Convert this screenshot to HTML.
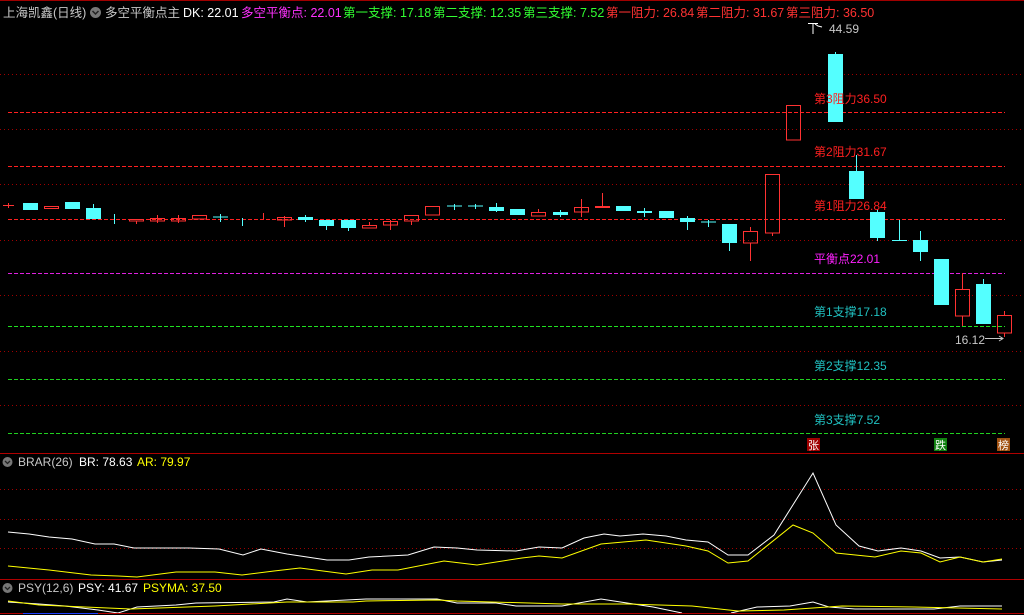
<!DOCTYPE html>
<html><head><meta charset="utf-8"><style>
html,body{margin:0;padding:0;background:#000;}
svg{display:block;font-family:"Liberation Sans","Noto Sans CJK SC",sans-serif;}
</style></head><body>
<svg width="1024" height="615" viewBox="0 0 1024 615" xmlns="http://www.w3.org/2000/svg">
<rect width="1024" height="615" fill="#000"/>
<line x1="0" y1="0.5" x2="1024" y2="0.5" stroke="#a00000"/>
<g font-size="12.5">
<text x="3" y="17" fill="#c8c8c8">上海凯鑫(日线)</text>
<circle cx="95.5" cy="12.5" r="5.5" fill="#777"/>
<path d="M92.5 11 L95.5 14 L98.5 11" stroke="#222" stroke-width="1.5" fill="none"/>
<text x="105" y="17" fill="#c8c8c8">多空平衡点主</text>
<text x="183" y="17" fill="#fff">DK: 22.01</text>
<text x="241" y="17" fill="#ff32ff">多空平衡点: 22.01</text>
<text x="343" y="17" fill="#32ff32">第一支撑: 17.18</text>
<text x="433" y="17" fill="#32ff32">第二支撑: 12.35</text>
<text x="523" y="17" fill="#32ff32">第三支撑: 7.52</text>
<text x="606" y="17" fill="#ff3232">第一阻力: 26.84</text>
<text x="696" y="17" fill="#ff3232">第二阻力: 31.67</text>
<text x="786" y="17" fill="#ff3232">第三阻力: 36.50</text>
</g>
<!-- grid dotted -->
<g stroke="#a00000" stroke-dasharray="1 3">
<line x1="0" y1="74.5" x2="1024" y2="74.5"/>
<line x1="0" y1="129.5" x2="1024" y2="129.5"/>
<line x1="0" y1="184.5" x2="1024" y2="184.5"/>
<line x1="0" y1="240.5" x2="1024" y2="240.5"/>
<line x1="0" y1="295.5" x2="1024" y2="295.5"/>
<line x1="0" y1="351.5" x2="1024" y2="351.5"/>
<line x1="0" y1="405.5" x2="1024" y2="405.5"/>
<line x1="0" y1="489.5" x2="1024" y2="489.5"/>
<line x1="0" y1="519.5" x2="1024" y2="519.5"/>
<line x1="0" y1="548.5" x2="1024" y2="548.5"/>
</g>
<g stroke-dasharray="4 2" stroke-width="1">
<line x1="8" y1="112.5" x2="1005" y2="112.5" stroke="#ff2020"/>
<line x1="8" y1="166.5" x2="1005" y2="166.5" stroke="#ff2020"/>
<line x1="8" y1="219.5" x2="1005" y2="219.5" stroke="#ff2020"/>
<line x1="8" y1="273.5" x2="1005" y2="273.5" stroke="#e020e0"/>
<line x1="8" y1="326.5" x2="1005" y2="326.5" stroke="#20e020"/>
<line x1="8" y1="379.5" x2="1005" y2="379.5" stroke="#20d020"/>
<line x1="8" y1="433.5" x2="1005" y2="433.5" stroke="#20d020"/>
</g>
<!-- candles -->
<g fill="#54ffff" stroke="none">
<rect x="23" y="203" width="15" height="7"/>
<rect x="65" y="202" width="15" height="7"/>
<rect x="86" y="208" width="15" height="11"/><rect x="93" y="204" width="1" height="4"/>
<rect x="114" y="214" width="1" height="10"/>
<rect x="213" y="216.5" width="15" height="1"/><rect x="220" y="214" width="1" height="8"/>
<rect x="242" y="218" width="1" height="8"/>
<rect x="298" y="217" width="15" height="3"/><rect x="305" y="215" width="1" height="7"/>
<rect x="319" y="220" width="15" height="6"/><rect x="326" y="226" width="1" height="4"/>
<rect x="341" y="220" width="15" height="8"/><rect x="348" y="228" width="1" height="3"/>
<rect x="447" y="205.5" width="15" height="1"/><rect x="454" y="204" width="1" height="6"/>
<rect x="468" y="205.5" width="15" height="1"/><rect x="475" y="204" width="1" height="5"/>
<rect x="489" y="207" width="15" height="4"/><rect x="496" y="203" width="1" height="9"/>
<rect x="510" y="209" width="15" height="6"/>
<rect x="553" y="212" width="15" height="3"/><rect x="560" y="210" width="1" height="7"/>
<rect x="616" y="206" width="15" height="5"/>
<rect x="637" y="211" width="15" height="2"/><rect x="644" y="208" width="1" height="9"/>
<rect x="659" y="211" width="15" height="7"/>
<rect x="680" y="218" width="15" height="4"/><rect x="687" y="216" width="1" height="14"/>
<rect x="701" y="221.5" width="15" height="1"/><rect x="708" y="220" width="1" height="7"/>
<rect x="722" y="224" width="15" height="19"/><rect x="729" y="243" width="1" height="8"/>
<rect x="828" y="54" width="15" height="68"/><rect x="835" y="52" width="1" height="2"/>
<rect x="849" y="171" width="15" height="28"/><rect x="856" y="155" width="1" height="16"/>
<rect x="870" y="212" width="15" height="26"/><rect x="877" y="209" width="1" height="32"/>
<rect x="892" y="240" width="15" height="1"/><rect x="899" y="220" width="1" height="20"/>
<rect x="913" y="240" width="15" height="12"/><rect x="920" y="231" width="1" height="30"/>
<rect x="934" y="259" width="15" height="46"/>
<rect x="976" y="284" width="15" height="40"/><rect x="983" y="279" width="1" height="5"/>
</g>
<g fill="none" stroke="#ff3232" stroke-width="1">
<line x1="3" y1="205.5" x2="14" y2="205.5"/><line x1="8.5" y1="203" x2="8.5" y2="208"/>
<rect x="44.5" y="206.5" width="14" height="2"/>
<rect x="129.5" y="219.5" width="14" height="1.5"/><line x1="136.5" y1="221" x2="136.5" y2="224"/>
<rect x="150.5" y="218.5" width="14" height="2.5"/><line x1="157.5" y1="215" x2="157.5" y2="223"/>
<rect x="171.5" y="218.5" width="14" height="2.5"/><line x1="178.5" y1="215" x2="178.5" y2="223"/>
<rect x="192.5" y="215.5" width="14" height="3.5"/>
<line x1="263.5" y1="213" x2="263.5" y2="219"/>
<rect x="277.5" y="217.5" width="14" height="2.5"/><line x1="284.5" y1="216" x2="284.5" y2="227"/>
<rect x="362.5" y="225.5" width="14" height="2.5"/><line x1="369.5" y1="222" x2="369.5" y2="225"/>
<rect x="383.5" y="221.5" width="14" height="3.5"/><line x1="390.5" y1="220" x2="390.5" y2="230"/>
<rect x="404.5" y="215.5" width="14" height="5.5"/><line x1="411.5" y1="221" x2="411.5" y2="225"/>
<rect x="425.5" y="206.5" width="14" height="8.5"/>
<rect x="531.5" y="212.5" width="14" height="3.5"/><line x1="538.5" y1="209" x2="538.5" y2="212"/>
<rect x="574.5" y="207.5" width="14" height="4.5"/><line x1="581.5" y1="199" x2="581.5" y2="217"/>
<rect x="595" y="206" width="15" height="2" fill="#ff3232" stroke="none"/><line x1="602.5" y1="193" x2="602.5" y2="206"/>
<rect x="743.5" y="231.5" width="14" height="11.5"/><line x1="750.5" y1="227" x2="750.5" y2="231"/><line x1="750.5" y1="243" x2="750.5" y2="261"/>
<rect x="765.5" y="174.5" width="14" height="58.5"/><line x1="772.5" y1="233" x2="772.5" y2="236"/>
<rect x="786.5" y="105.5" width="14" height="34.5"/>
<rect x="955.5" y="289.5" width="14" height="26.5"/><line x1="962.5" y1="273" x2="962.5" y2="289"/><line x1="962.5" y1="316" x2="962.5" y2="326"/>
<rect x="997.5" y="315.5" width="14" height="17.5"/><line x1="1004.5" y1="311" x2="1004.5" y2="315"/><line x1="1004.5" y1="333" x2="1004.5" y2="337"/>
</g>
<!-- labels -->
<g font-size="12">
<path d="M808 23.5 H818 M813 23.5 V34 M815 24 L818 26 L822 27" stroke="#fff" fill="none"/>
<text x="829" y="33" fill="#c8c8c8">44.59</text>
<text x="955" y="344" fill="#c8c8c8">16.12</text>
<path d="M985 338.5 H1003 M999 336 L1003 338.5 L999 341" stroke="#c8c8c8" fill="none"/>
<text x="814" y="103" fill="#ff2020">第3阻力36.50</text>
<text x="814" y="156" fill="#ff2020">第2阻力31.67</text>
<text x="814" y="210" fill="#ff2020">第1阻力26.84</text>
<text x="814" y="263" fill="#ff20ff">平衡点22.01</text>
<text x="814" y="316" fill="#20c0c0">第1支撑17.18</text>
<text x="814" y="370" fill="#20c0c0">第2支撑12.35</text>
<text x="814" y="424" fill="#20c0c0">第3支撑7.52</text>
</g>
<g font-size="11">
<rect x="807" y="438" width="13" height="13" fill="#a00000"/><text x="808" y="449" fill="#fff">张</text>
<rect x="934" y="438" width="13" height="13" fill="#108010"/><text x="935" y="449" fill="#fff">跌</text>
<rect x="997" y="438" width="13" height="13" fill="#a05010"/><text x="998" y="449" fill="#fff">榜</text>
</g>
<line x1="0" y1="453.5" x2="1024" y2="453.5" stroke="#b00000"/>
<!-- BRAR -->
<circle cx="7.5" cy="462" r="5" fill="#777"/><path d="M5 461 L7.5 463.5 L10 461" stroke="#222" stroke-width="1.3" fill="none"/>
<g font-size="12">
<text x="18" y="466" fill="#c8c8c8">BRAR(26)</text>
<text x="79" y="466" fill="#fff">BR: 78.63</text>
<text x="137" y="466" fill="#ffff00">AR: 79.97</text>
</g>
<polyline fill="none" stroke="#fff" stroke-width="1" points="8,532 29,534 49,537 72,539 95,544 114,544 134,548 189,548 219,549 243,555 261,549 287,554 327,560 349,560 369,557 408,555 434,547 457,548 477,550 516,551 539,547 562,548 584,538 604,534 620,536 643,534 666,536 686,540 708,542 728,555 748,555 774,535 813,473 836,525 859,546 878,551 901,548 921,551 940,558 960,557 983,562 1002,560"/>
<polyline fill="none" stroke="#ffff00" stroke-width="1" points="8,566 49,570 91,575 118,576 137,577 176,572 215,572 242,575 274,571 300,568 346,574 372,570 398,570 444,561 477,565 522,558 539,556 562,558 601,544 646,540 686,546 708,551 728,563 748,561 793,525 813,533 836,553 875,557 901,551 921,553 940,562 960,557 983,562 1002,559"/>
<line x1="0" y1="579.5" x2="1024" y2="579.5" stroke="#b00000"/>
<!-- PSY -->
<circle cx="7.5" cy="588" r="5" fill="#777"/><path d="M5 587 L7.5 589.5 L10 587" stroke="#222" stroke-width="1.3" fill="none"/>
<g font-size="12">
<text x="18" y="592" fill="#c8c8c8">PSY(12,6)</text>
<text x="78" y="592" fill="#fff">PSY: 41.67</text>
<text x="143" y="592" fill="#ffff00">PSYMA: 37.50</text>
</g>
<polyline fill="none" stroke="#fff" points="8,602 39,604 65,606 98,610 118,613 137,607 176,605 196,603 274,602 287,599 307,602 366,599 437,599 457,603 496,603 516,606 562,606 601,599 627,603 653,607 682,613"/>
<polyline fill="none" stroke="#fff" points="731,613 757,607 790,606 813,602 829,607 855,609 934,609 960,606 1002,606"/>
<polyline fill="none" stroke="#ffff00" points="8,601 39,605 85,607 131,609 215,606 287,602 353,602 366,601 437,600 457,601 529,603 562,604 627,604 692,606 738,611 784,610 842,606 914,607 1002,609"/>
<line x1="0" y1="613.5" x2="1024" y2="613.5" stroke="#b00000"/>
<line x1="23" y1="613.5" x2="98" y2="613.5" stroke="#2040ff"/>
</svg>
</body></html>
